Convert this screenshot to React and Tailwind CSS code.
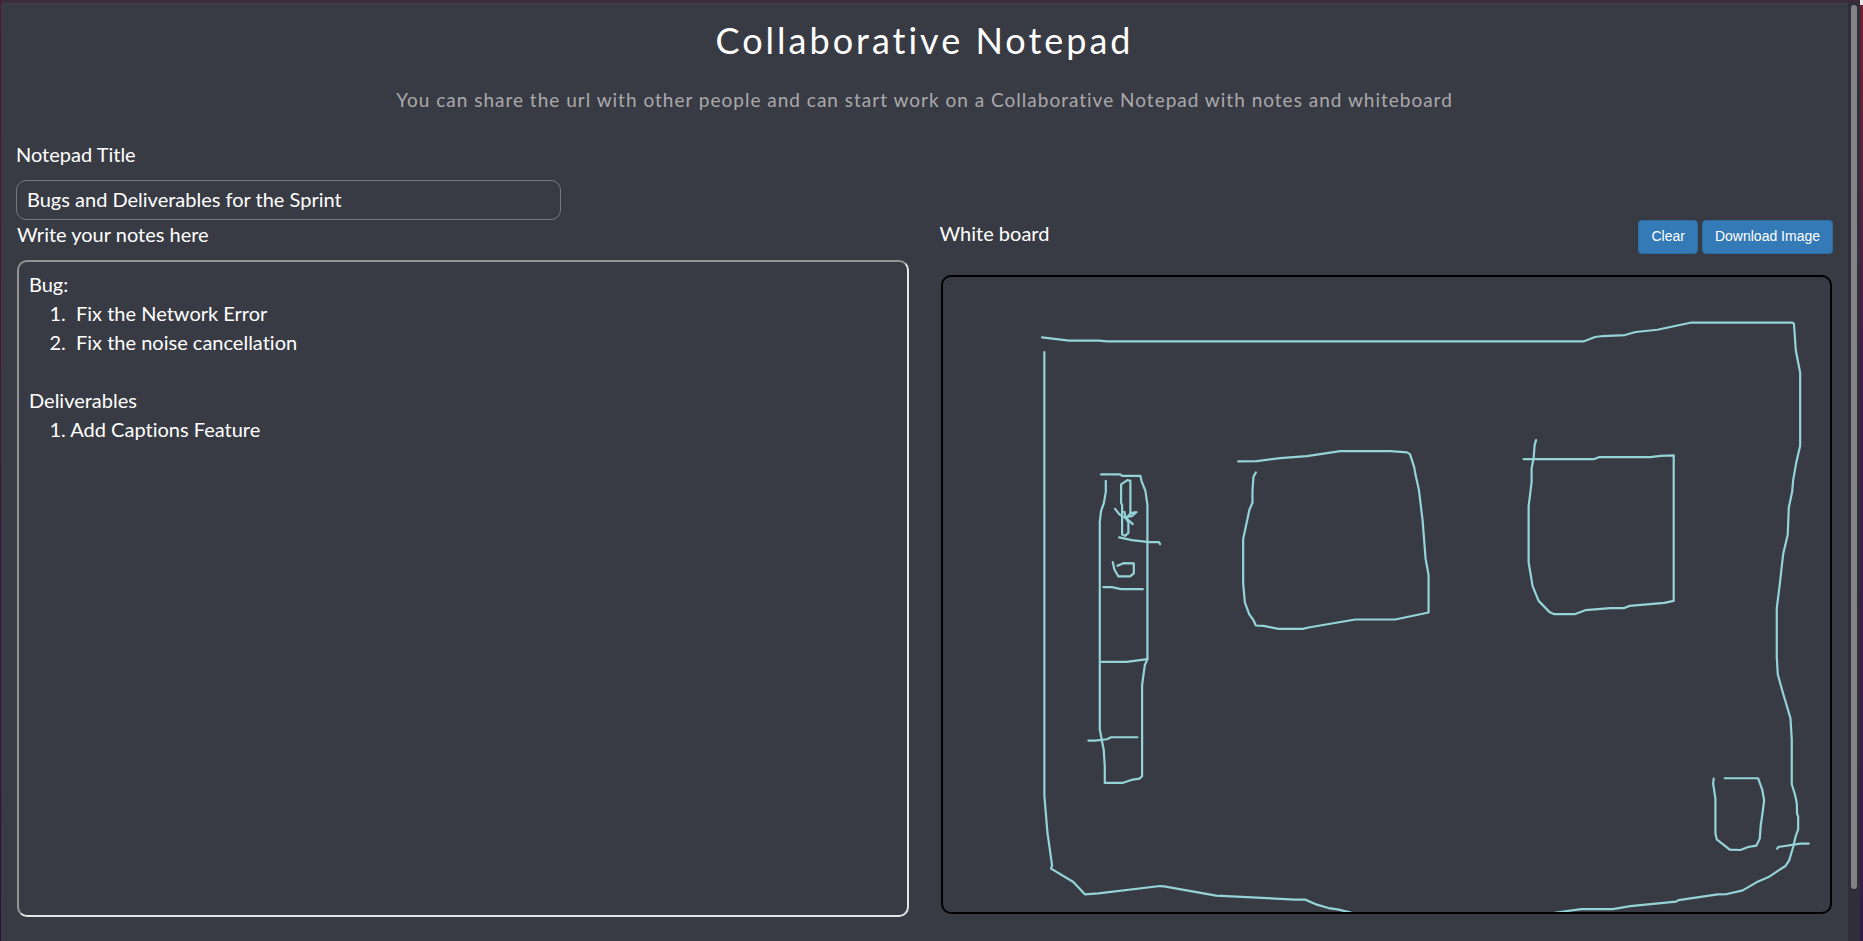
import { useState } from "react";

const STROKES = [
  // outer frame
  "M1042 337.4 L1069 340.5 L1099 340.5 L1107 341.3 L1583.7 341.3 L1594.8 337 L1602.4 336 L1624.6 335 L1635.3 332 L1657 329.7 L1690 322.7 L1792.3 322.7 L1793.5 324 L1795.4 350.7 L1799.7 372.7 L1799.7 445.7 L1795.7 463 L1792.7 480 L1791.7 491.7 L1788.3 507.7 L1787.3 534.3 L1782.7 554 L1779.3 584.3 L1776.3 608.3 L1776.3 656.7 L1777.3 674 L1782 691 L1790 718 L1791.3 739 L1791.3 784 L1794.7 795 L1796.3 803 L1796.7 814 L1797.7 816 L1797.7 829 L1795.3 835.7 L1792.7 846.7 L1788.7 860 L1785 865.7 L1776.7 871 L1767.7 877 L1756 882 L1742.3 890 L1726.7 893.7 L1717.3 894 L1678.3 899.7 L1675.7 901.3 L1630 905.7 L1612.3 908.7 L1580.7 908.7 L1552.7 912.7",
  "M1044.3 352 L1044.3 795 L1047.3 831.7 L1052 865 L1051 868.3 L1073.3 881.7 L1084.7 894 L1098.3 893 L1160 885.7 L1164 886 L1216 895.3 L1295 899.3 L1305 899.3 L1316.7 904.3 L1328.3 907.7 L1337.3 909 L1350.7 912.3",
  // sidebar
  "M1101 474.3 L1120 474.3 L1122 475.7 L1140.3 475.7 L1141.3 480.7 L1145.3 490.7 L1147.3 505 L1147.3 659 L1144.7 665 L1142 685 L1142 776 L1139.3 778.3 L1132.7 779.3 L1122.3 782.7 L1104.7 782.7 L1104.7 766.7 L1103.7 750 L1099.7 729.3 L1099.7 521.7 L1101 510.7 L1103.7 503.3 L1105.7 491.7 L1105.7 480.7",
  "M1103.3 587 L1111.7 587 L1121 589 L1142.7 589",
  "M1101.7 661.7 L1126.7 661.7 L1147.3 659",
  "M1088.3 740.3 L1095 740.3 L1106.7 739 L1111 737 L1137.3 737",
  // pencil
  "M1130.3 513 L1130.3 480.7 L1127.3 480 L1121 484.3 L1121 502.7 L1122 505 L1122 534.3 L1125 535.7 L1128.3 532.7 L1128.3 522 L1125.7 518 L1124.3 511.7",
  "M1115 508.7 L1119.3 514.3 L1124 517.3 L1131.7 516 L1136.3 512 L1130.7 513 L1126 518 L1132.7 524",
  "M1119 537.3 L1131.7 540 L1149.3 542 L1159 542 L1160 544",
  "M1112.7 562 L1114.3 569.3 L1118.3 576.3 L1130 576.3 L1133.7 573.3 L1133.7 563.3 L1123.3 563 L1117.3 565.7",
  // centre panel
  "M1238 461.3 L1256.7 461 L1280 458 L1306.7 456 L1340 451 L1390 451 L1406.7 452.3 L1409.7 454 L1414 467.3 L1415.3 475 L1418.7 490 L1422.3 520 L1425.3 558.3 L1428.3 575 L1428.3 612.3 L1395 619.3 L1355 619.3 L1308.3 627.3 L1302.7 628.7 L1278.3 628.7 L1263.3 625.7 L1255.7 625.3 L1253.3 620 L1249 614 L1244.7 602.3 L1243 583.3 L1243 539 L1249.3 509.3 L1252.3 502.7 L1252.3 490 L1253.3 476.7 L1255.7 472.3",
  // right panel
  "M1523.3 459 L1594 459 L1599 457 L1650 457 L1660 455.7 L1673.3 455.3 L1673.3 600.7 L1664 602.7 L1629.3 605.7 L1623.3 608 L1610 608 L1585 610 L1574.3 614 L1554 614 L1549 611.7 L1538.3 600.7 L1532.3 586 L1528.3 562.3 L1528.3 505.7 L1529.7 495 L1531.3 481.7 L1531.3 468.3 L1533.3 458.3 L1534.3 445 L1535.7 440",
  // corner box
  "M1724.3 778 L1757.7 778 L1761.7 789 L1763.7 800 L1762 813.3 L1760.3 825 L1759.3 838.3 L1756 845.3 L1747.7 846.7 L1740 849.7 L1729.3 849.3 L1716.3 839 L1715 833.3 L1715 798.3 L1712.7 783.3 L1713.3 778.3",
  "M1776.7 848.3 L1777.7 846.7 L1800 843.3 L1808.3 843.3",
];

const NOTES = `Bug:
    1.  Fix the Network Error
    2.  Fix the noise cancellation

Deliverables
    1. Add Captions Feature`;

function BoardButton({ children, ...props }) {
  return (
    <button
      type="button"
      className="h-[34px] rounded-sm border border-[#2e6da4] bg-[#337ab7] px-3 pb-0.5 font-['Liberation_Sans',sans-serif] text-sm text-white"
      {...props}
    >
      {children}
    </button>
  );
}

export default function App() {
  const [title, setTitle] = useState("Bugs and Deliverables for the Sprint");
  const [notes, setNotes] = useState(NOTES);
  const [strokes, setStrokes] = useState(STROKES);

  return (
    <div className="flex min-h-screen bg-[#393b44] font-['Lato',sans-serif] text-xl leading-[26px] text-white [font-variant-ligatures:none]">
      <div className="w-px bg-linear-to-b from-[#5a1238] to-[#2e0f3c]" />
      <div className="flex min-w-0 flex-1 flex-col">
        <div className="h-0.5 border-b border-[#45203a] bg-[#333333]" />
        <div className="flex flex-1">
          <main className="flex min-w-0 flex-1 flex-col px-[15px] pt-[18px]">
            <h1 className="text-center text-4xl leading-10 tracking-[3px]">Collaborative Notepad</h1>
            <p className="mt-[27px] text-center text-[19px] leading-[26px] tracking-[1px] text-[#a9a9ab]">
              You can share the url with other people and can start work on a Collaborative Notepad
              with notes and whiteboard
            </p>
            <label htmlFor="title" className="mt-7 self-start">
              Notepad Title
            </label>
            <input
              id="title"
              value={title}
              onChange={(e) => setTitle(e.target.value)}
              className="mt-[13px] h-10 w-full max-w-[545px] rounded-[10px] border border-[#77787e] bg-transparent px-2.5 pb-0.5 outline-none"
            />
            <div className="grid flex-1 grid-cols-2 gap-[30px]">
              <section className="flex min-w-0 flex-col px-px pb-6">
                <label htmlFor="notes" className="mt-px self-start">
                  Write your notes here
                </label>
                <textarea
                  id="notes"
                  value={notes}
                  onChange={(e) => setNotes(e.target.value)}
                  spellCheck={false}
                  className="mt-[13px] block w-full flex-1 resize-none rounded-[10px] border-2 border-t-[#949494] border-r-[#e6e6e6] border-b-[#e6e6e6] border-l-[#949494] bg-transparent px-2.5 py-2 leading-[29px] outline-none"
                />
              </section>
              <section className="flex min-w-0 flex-col pb-[27px]">
                <div className="flex items-start justify-between">
                  <h2>White board</h2>
                  <div className="flex gap-1">
                    <BoardButton onClick={() => setStrokes([])}>Clear</BoardButton>
                    <BoardButton>Download Image</BoardButton>
                  </div>
                </div>
                <div className="mx-px mt-[21px] flex min-h-0 flex-1 overflow-hidden rounded-[10px] border-2 border-black">
                  <svg
                    viewBox="943 277 887 635"
                    preserveAspectRatio="xMinYMin meet"
                    role="img"
                    aria-label="Whiteboard drawing"
                    className="h-full w-full"
                  >
                    <g fill="none" stroke="#94d3d8" strokeWidth="2.2" strokeLinecap="round" strokeLinejoin="round">
                      {strokes.map((d) => (
                        <path key={d} d={d} />
                      ))}
                    </g>
                  </svg>
                </div>
              </section>
            </div>
          </main>
          <div className="flex w-3 flex-col items-center bg-[#302f39] pt-[3px]">
            <div className="w-1.5 flex-[17] rounded-full bg-[#818286]" />
            <div className="flex-1" />
          </div>
        </div>
      </div>
      <div className="flex w-[3px] flex-col bg-linear-to-b from-[#6b2230] via-[#3f1c4a] via-40% to-[#341c4a]">
        <div className="h-[5px] bg-[#e8e8e8]" />
      </div>
    </div>
  );
}
